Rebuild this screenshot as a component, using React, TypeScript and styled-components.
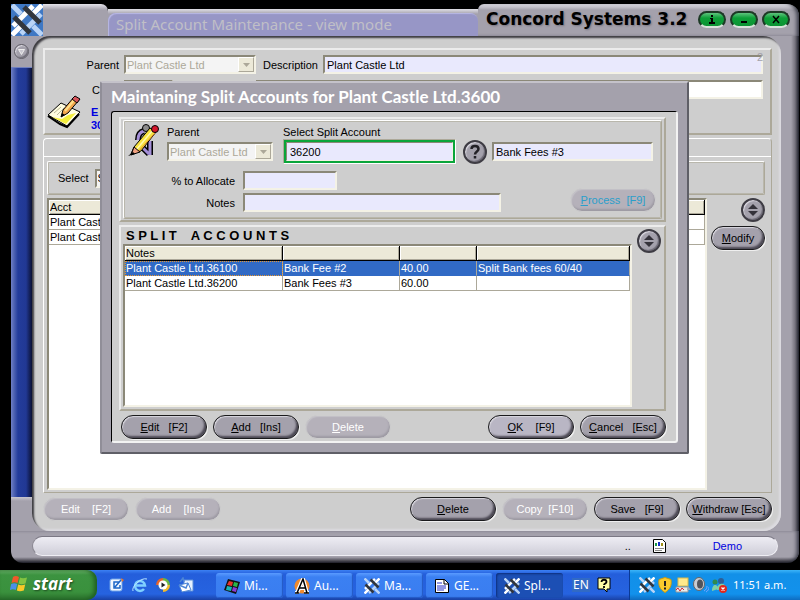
import React from "react";
import styled, { createGlobalStyle, css } from "styled-components";

const c = {
  metal: "#a4a1ac",
  face: "#cecece",
  tan: "#aca899",
  field: "#e9e9fd",
  header: "#ece9d8",
  select: "#316ac5",
};

const Global = createGlobalStyle`
  * { box-sizing: border-box; }
  body { margin: 0; background: #000; }
  body, button, input, select, table {
    font-family: "Liberation Sans", Arial, sans-serif;
    font-size: 11px;
    line-height: 14px;
    color: #000;
  }
`;

/* ---------- shared parts ---------- */

const sunken = css`
  border: 2px solid;
  border-color: #8b8878 #f4f2e6 #f4f2e6 #8b8878;
`;

const raised = css`
  border: 2px solid;
  border-color: #ececec ${c.tan} ${c.tan} #ececec;
`;

const etched = css`
  border: 1px solid ${c.tan};
  border-color: #fff ${c.tan} ${c.tan} #fff;
  outline: 1px solid;
  outline-color: #b9b7ac;
  outline-offset: -2px;
  border-radius: 2px;
`;

const TextInput = styled.input<{ $white?: boolean; $width?: string }>`
  ${sunken}
  width: ${(p) => p.$width ?? "100%"};
  min-width: 0;
  height: 19px;
  padding: 0 2px;
  background: ${(p) => (p.$white ? "#fff" : c.field)};
  &:focus { outline: none; }
`;

const SelectFrame = styled.div<{ $width: string }>`
  ${sunken}
  display: flex;
  width: ${(p) => p.$width};
  height: 19px;
  background: #f4f4f4;
`;

const SelectControl = styled.select`
  appearance: none;
  flex: 1;
  min-width: 0;
  border: 0;
  padding: 0 1px;
  background: transparent;
  &:disabled { color: ${c.tan}; opacity: 1; }
`;

const SelectArrow = styled.span`
  display: flex;
  align-items: center;
  justify-content: center;
  width: 16px;
  background: ${c.header};
  border: 1px solid #fff;
  border-right-color: ${c.tan};
  border-bottom-color: ${c.tan};
`;

const DropDown = ({ id, value, width, disabled }: { id: string; value: string; width: string; disabled?: boolean }) => (
  <SelectFrame $width={width}>
    <SelectControl id={id} disabled={disabled} defaultValue={value}>
      <option>{value}</option>
    </SelectControl>
    <SelectArrow>
      <svg width="7" height="4" viewBox="0 0 7 4"><path d="M0 0h7L3.5 4z" fill={c.tan} /></svg>
    </SelectArrow>
  </SelectFrame>
);

const Pill = styled.button<{ $light?: boolean; $narrow?: boolean; $cyan?: boolean }>`
  flex: none;
  width: ${(p) => (p.$narrow ? 54 : 86)}px;
  height: 24px;
  padding: 0;
  border: 1px solid #1a1a1c;
  border-radius: 12px;
  background: ${(p) => (p.$light ? "#b9b6c4" : c.metal)};
  box-shadow: inset 1px 1px 1px #d9d7df, inset -2px -2px 2px #4c4954, 1px 1px 0 #efefef;
  white-space: pre;
  text-align: center;
  &:disabled {
    border-color: ${c.face};
    background: #b5b1ba;
    box-shadow: inset 1px 1px 1px #c4c2c8, inset -1px -2px 2px #9d9aa3;
    color: ${(p) => (p.$cyan ? "#2a9fcb" : "#fff")};
  }
`;

const RoundButton = styled.button<{ $small?: boolean }>`
  flex: none;
  display: flex;
  align-items: center;
  justify-content: center;
  width: ${(p) => (p.$small ? 15 : 24)}px;
  height: ${(p) => (p.$small ? 15 : 24)}px;
  padding: 0;
  border: ${(p) => (p.$small ? "1px solid #5f5d66" : "2px solid #3e3c44")};
  border-radius: 50%;
  background: ${c.metal};
  box-shadow: inset 1px 1px 1px #dedce4, inset -1px -1px 1px #6b6874;
`;

const UpDown = ({ label }: { label: string }) => (
  <RoundButton aria-label={label}>
    <svg width="12" height="14" viewBox="0 0 12 14">
      <path d="M6 1l5 5H1z" fill="#34323a" />
      <path d="M6 13l5-5H1z" fill="#34323a" />
    </svg>
  </RoundButton>
);

const GridFrame = styled.div`
  ${sunken}
  flex: 1;
  min-width: 0;
  overflow: hidden;
  background: #fff;
`;

const Grid = styled.table`
  width: 100%;
  table-layout: fixed;
  border-collapse: separate;
  border-spacing: 0;
  th, td {
    height: 15px;
    padding: 0 1px;
    text-align: left;
    font-weight: normal;
    line-height: 13px;
    white-space: nowrap;
    overflow: hidden;
  }
  th {
    background: ${c.header};
    border-right: 1px solid #000;
    border-bottom: 1px solid #000;
    box-shadow: inset 1px 1px 0 #fff, inset -1px -1px 0 ${c.tan};
  }
  td {
    border-right: 1px solid ${c.tan};
    border-bottom: 1px solid ${c.tan};
  }
`;

const Row = styled.tr<{ $selected?: boolean }>`
  ${(p) =>
    p.$selected &&
    css`
      td { background: ${c.select}; color: #fff; border-bottom-color: ${c.select}; }
      td:first-child { outline: 1px dotted #e8962e; outline-offset: -1px; }
    `}
`;

/* ---------- drawings ---------- */

const LogoMark = ({ size, blue }: { size: number; blue?: boolean }) => (
  <svg width={size} height={size} viewBox="0 0 32 32">
    {blue && <rect width="32" height="32" fill="#3f78c4" />}
    <g strokeWidth="5" fill="none">
      <path d="M1 1l9 9M22 22l9 9" stroke="#b9d4f7" />
      <path d="M31 1l-9 9M1 31l9-9" stroke="#fff" />
      <path d="M2 22L22 2" stroke="#fff" />
      <path d="M10 30l20-20" stroke="#b9d4f7" />
      <path d="M13 3l16 16" stroke="#32363d" />
      <path d="M3 13l16 16" stroke="#32363d" />
    </g>
  </svg>
);

const NotePencil = () => (
  <svg width="34" height="34" viewBox="0 0 34 34">
    <path d="M1 20L14 8l19 9-13 14z" fill="#fffde0" stroke="#000" />
    <path d="M1 21l12 8 7 3 12-13" fill="none" stroke="#000" strokeWidth="2" />
    <path d="M5 22l14 7 10-11-8 2-6 4z" fill="#f4ee3c" />
    <path d="M7 18l7-6M10 20l7-7" stroke="#b9b89a" />
    <path d="M14 22l2-7L27 2l5 3-11 13z" fill="#f3a64b" stroke="#000" />
    <path d="M18 16L28 4" stroke="#ffe08a" strokeWidth="2" />
    <path d="M25 4l3-3 5 3-3 4z" fill="#d8565c" stroke="#000" />
    <path d="M14 22l1-4 3 2z" fill="#000" />
  </svg>
);

const PencilPeople = () => (
  <svg width="32" height="34" viewBox="0 0 32 34">
    <path d="M10 16c0-5 2-8 6-9M22 17v14M15 24l6 6" fill="none" stroke="#000" strokeWidth="6" />
    <path d="M10 16c0-5 2-8 6-9M22 17v14M15 24l6 6" fill="none" stroke="#a48fd8" strokeWidth="3" />
    <circle cx="18" cy="4" r="3.5" fill="#8b8b8b" stroke="#000" />
    <path d="M3 30L6 23 22 4l6 4-15 19z" fill="#f7e23e" stroke="#000" />
    <path d="M8 26L25 6" stroke="#fff9b0" strokeWidth="1.5" />
    <path d="M10 28L27 9" stroke="#e08b2d" strokeWidth="1" />
    <circle cx="27" cy="5" r="3.5" fill="#d3162b" stroke="#000" />
    <path d="M6 23l6 5-9 3z" fill="#f0a080" stroke="#000" />
    <path d="M0 32l5-4 2 2z" fill="#000" />
  </svg>
);

/* ---------- main window ---------- */

const Screen = styled.div`
  display: flex;
  flex-direction: column;
  min-height: 100vh;
  background: #000;
`;

const Desktop = styled.main`
  position: relative;
  flex: 1;
  display: flex;
  padding: 4px 1px 7px 11px;
`;

const Frame = styled.section`
  flex: 1;
  min-width: 0;
  display: flex;
  flex-direction: column;
`;

const TitleRow = styled.header`
  display: flex;
  height: 32px;
  align-items: stretch;
`;

const LeftTab = styled.div`
  width: 65px;
  border-radius: 0 7px 0 0;
  background: linear-gradient(#e4e3ea, ${c.metal} 6px);
`;

const CaptionSlot = styled.div`
  flex: 1;
  min-width: 0;
  display: flex;
  margin-top: 5px;
  padding-top: 4px;
  background: linear-gradient(#e0dfe6, ${c.metal} 5px);
`;

const Caption = styled.h1`
  flex: 1;
  margin: 0;
  padding: 0 8px;
  border-radius: 8px 8px 0 0;
  background: #9796c6;
  box-shadow: inset 1px 1px 1px #b9b8e4;
  font: 15px/23px "Noto Sans", sans-serif;
  color: #c0bfc6;
  white-space: nowrap;
`;

const BrandTab = styled.div`
  display: flex;
  align-items: center;
  gap: 4px;
  width: 321px;
  padding: 0 9px 2px 8px;
  border-radius: 6px 12px 0 0;
  background: linear-gradient(#e4e3ea, ${c.metal} 6px);
  box-shadow: inset -4px 0 4px -2px #2b2d3a;
`;

const Brand = styled.span`
  flex: 1;
  font: bold 17px/20px "DejaVu Sans", Verdana, sans-serif;
  text-shadow: 1px 1px 2px #77747f;
  white-space: nowrap;
`;

const GreenButton = styled.button`
  display: flex;
  align-items: center;
  justify-content: center;
  width: 28px;
  height: 17px;
  padding: 0;
  border: 2px solid #1d3a26;
  border-bottom-color: #d8e2da;
  border-radius: 9px;
  background: linear-gradient(#5fc47e, #0d9f38 5px, #0c9334);
`;

const Middle = styled.div`
  flex: 1;
  display: flex;
  padding-right: 18px;
  background: linear-gradient(90deg, ${c.metal} calc(100% - 8px), #77747f calc(100% - 4px), #1c1e28);
`;

const Rail = styled.div`
  display: flex;
  flex-direction: column;
  width: 21px;
`;

const RailTop = styled.div`
  display: flex;
  align-items: center;
  justify-content: center;
  height: 31px;
`;

const RailBar = styled.div`
  flex: 1;
  border-top: 1px solid #6f7fc0;
  background: linear-gradient(90deg, #6f80c4, #233c9b 7px, #213894 15px, #0a1033);
`;

const RailFoot = styled.div`
  height: 34px;
  background: linear-gradient(#c9c7cf, ${c.metal} 4px);
`;

const Content = styled.div`
  flex: 1;
  min-width: 0;
  display: flex;
  flex-direction: column;
  padding: 12px 9px 10px 11px;
  border-radius: 18px;
  background: ${c.face};
  box-shadow: inset 2px 2px 2px #3c3b40, inset -2px -2px 2px #dcdbe0;
`;

const HeaderPanel = styled.div`
  ${raised}
  display: flex;
  height: 87px;
  padding: 5px 7px 4px 2px;
`;

const IconColumn = styled.div<{ $width: number; $bottom?: boolean }>`
  display: flex;
  flex: none;
  align-items: ${(p) => (p.$bottom ? "flex-end" : "flex-start")};
  width: ${(p) => p.$width}px;
`;

const HeaderFields = styled.div`
  flex: 1;
  display: grid;
  grid-template-columns: 39px 132px 67px 1fr;
  grid-template-rows: 19px 19px 27px;
  row-gap: 6px;
  align-items: center;
`;

const HeaderLabel = styled.label<{ $inset?: boolean }>`
  padding-right: 5px;
  padding-left: ${(p) => (p.$inset ? 7 : 0)}px;
  text-align: ${(p) => (p.$inset ? "left" : "right")};
  white-space: nowrap;
`;

const BlueNote = styled.div`
  padding-left: 6px;
  font-weight: bold;
  line-height: 13px;
  color: #0000e0;
`;

const WideCell = styled.div`
  grid-column: 3 / 5;
  display: flex;
`;

const CornerCount = styled.span`
  position: absolute;
  top: 50px;
  right: 37px;
  color: #a3a2ab;
`;

const TabPanel = styled.div`
  flex: 1;
  display: flex;
  flex-direction: column;
  margin: 3px 0 4px;
  border: 1px solid;
  border-color: #fff ${c.tan} ${c.tan} #fff;
  border-radius: 4px 4px 0 0;
`;

const TabStrip = styled.div`
  height: 18px;
  border-bottom: 1px solid #fff;
`;

const TabBody = styled.div`
  flex: 1;
  display: flex;
  flex-direction: column;
  gap: 3px;
  padding: 4px 6px 2px 3px;
`;

const FilterRow = styled.div`
  ${etched}
  display: flex;
  align-items: center;
  gap: 6px;
  height: 34px;
  padding-left: 10px;
`;

const GridRow = styled.div`
  flex: 1;
  display: flex;
  gap: 4px;
`;

const SideButtons = styled.div`
  display: flex;
  flex-direction: column;
  align-items: flex-end;
  gap: 4px;
`;

const ButtonRow = styled.div<{ $indent?: boolean }>`
  display: flex;
  gap: 6px;
  padding-left: ${(p) => (p.$indent ? 2 : 0)}px;
`;

const Spacer = styled.span`
  flex: 1;
`;

const StatusArea = styled.footer`
  height: 32px;
  padding: 5px 21px 7px;
  border-radius: 0 0 12px 12px;
  background: linear-gradient(${c.metal} 26px, #5e5c66 29px, #1b1c24);
  box-shadow: inset -4px 0 4px -2px #2b2d3a;
`;

const StatusPill = styled.div`
  display: flex;
  align-items: center;
  height: 20px;
  padding-right: 35px;
  border: 1px solid #7b7884;
  border-color: #7b7884 #efeef4 #efeef4 #8b8892;
  border-radius: 10px;
  background: linear-gradient(#eeedf4, #cfced8);
`;

const StatusDots = styled.span`
  width: 28px;
`;

const StatusUser = styled.span`
  margin-left: 47px;
  color: #0000e0;
`;

/* ---------- dialog ---------- */

const Dialog = styled.section`
  position: absolute;
  top: 81px;
  left: 100px;
  right: 111px;
  padding: 0 9px 9px;
  border: 2px solid;
  border-color: #c4c2ca #5f5f67 #5f5f67 #908e98;
  border-radius: 2px;
  background: ${c.metal};
`;

const DialogTitle = styled.h2`
  margin: 0;
  font: bold 17px/28px Lato, sans-serif;
  color: #fff;
  white-space: nowrap;
`;

const DialogBody = styled.div`
  display: flex;
  flex-direction: column;
  padding: 5px 10px 2px 7px;
  border: 1px solid #000;
  border-right: 2px solid #f2f2f2;
  border-bottom: 2px solid #f2f2f2;
  border-radius: 3px;
  background: ${c.face};
`;

const EntryPanel = styled.form`
  ${raised}
  height: 105px;
  padding: 1px 2px;
`;

const EntryGroup = styled.div`
  ${etched}
  display: flex;
  height: 99px;
  padding: 3px 5px 4px 4px;
`;

const EntryFields = styled.div`
  flex: 1;
  min-width: 0;
`;

const AccountGrid = styled.div`
  display: grid;
  grid-template-columns: 109px 173px 22px 1fr;
  grid-template-rows: 15px 25px;
  column-gap: 7px;
  align-items: center;
  padding-right: 3px;
`;

const AccountLabel = styled.label<{ $wide?: boolean }>`
  grid-column: ${(p) => (p.$wide ? "2 / 5" : "1")};
`;

const FocusFrame = styled.div`
  display: flex;
  height: 25px;
  padding: 1px;
  border: 1px solid;
  border-color: ${c.tan} #fff #fff ${c.tan};
  background: #fff;
  input { height: 21px; outline: 2px solid #0aa53a; outline-offset: -1px; padding: 0 3px; }
`;

const AllocationRow = styled.div`
  display: flex;
  align-items: flex-end;
  justify-content: space-between;
  margin-top: 7px;
`;

const AllocationGrid = styled.div`
  display: grid;
  grid-template-columns: 76px 258px;
  row-gap: 3px;
  align-items: center;
`;

const AllocationLabel = styled.label`
  padding-right: 8px;
  text-align: right;
  white-space: nowrap;
`;

const ListPanel = styled.div`
  ${raised}
  display: flex;
  gap: 3px;
  margin: 3px 0 4px;
  padding: 0 0 2px 2px;
`;

const ListColumn = styled.div`
  flex: 1;
  min-width: 0;
  display: flex;
  flex-direction: column;
`;

const ListTitle = styled.h3`
  margin: 0;
  padding: 1px 3px 0;
  font: bold 13px/16px "Liberation Sans", sans-serif;
  white-space: pre;
`;

const SplitFrame = styled(GridFrame)`
  flex: none;
  height: 163px;
`;

const SideSlot = styled.div`
  width: 29px;
  padding: 2px 0 0 2px;
`;

/* ---------- taskbar ---------- */

const Taskbar = styled.nav`
  display: flex;
  height: 30px;
  background: linear-gradient(#3c81f3, #245edb 4px, #2663e0 24px, #1941a5);
  button, span, time { font-family: "Noto Sans", sans-serif; font-size: 12px; color: #fff; }
`;

const StartButton = styled.button`
  display: flex;
  align-items: center;
  gap: 5px;
  width: 97px;
  padding: 0 0 2px 10px;
  border: 0;
  border-radius: 0 10px 10px 0;
  background: linear-gradient(#6fb86f, #3c9340 5px, #3a913d 22px, #2a6f2c);
  box-shadow: inset -3px 0 4px #1f5f22;
`;

const StartText = styled.b`
  font: italic bold 17px/20px "Open Sans", sans-serif;
  text-shadow: 1px 1px 2px #1c4a1e;
`;

const QuickLaunch = styled.div`
  display: flex;
  align-items: center;
  gap: 7px;
  width: 119px;
  padding-left: 12px;
`;

const TaskList = styled.div`
  display: flex;
  gap: 3px;
  flex: 1;
  padding: 3px 0 2px;
`;

const TaskButton = styled.button<{ $active?: boolean }>`
  display: flex;
  align-items: center;
  gap: 4px;
  width: 67px;
  padding: 0 0 0 8px;
  border: 0;
  border-radius: 3px;
  background: ${(p) => (p.$active ? "#1c4fb4" : "linear-gradient(#5a9bff, #3b80f2 4px, #3a7df0)")};
  box-shadow: ${(p) => (p.$active ? "inset 1px 1px 2px #0d2f7c" : "inset -1px -1px 1px #2459c4")};
`;

const Language = styled.div`
  display: flex;
  align-items: center;
  gap: 7px;
  width: 59px;
  padding-left: 2px;
`;

const LanguageCode = styled.span`
  padding: 0 1px;
  background: #316ac5;
`;

const Tray = styled.div`
  display: flex;
  align-items: center;
  gap: 2px;
  width: 171px;
  padding-left: 9px;
  border-left: 1px solid #0a3a96;
  background: linear-gradient(#3cb4f8, #1290e8 4px, #1291ec 24px, #0e6cc0);
`;

const Clock = styled.time`
  margin-left: 4px;
  && { font-size: 11px; }
  white-space: nowrap;
`;

const FlagIcon = () => (
  <svg width="18" height="18" viewBox="0 0 18 18">
    <path d="M3 2c2-1.500 4-1 6 0L7.500 8C5.500 7 3.500 7 1.500 8z" fill="#f0582a" />
    <path d="M10 2.500c2 1 4 1 7 0L15.500 8.500c-3 1-5 1-7 0z" fill="#83c341" />
    <path d="M1.200 9c2-1 4-1 6 0L5.800 15c-2-1-4-1-6 0z" fill="#4a8fe8" />
    <path d="M8.200 9.500c2 1 4 1 7 0L13.800 15.500c-3 1-5 1-7 0z" fill="#f8c828" />
  </svg>
);

const QuickDesktop = () => (
  <svg width="16" height="16" viewBox="0 0 16 16">
    <rect x="1" y="2" width="12" height="12" rx="2" fill="#f4f8ff" stroke="#6aa0e8" />
    <path d="M10 5H5v6h6V8M6 10l6-7" fill="none" stroke="#1d66c8" strokeWidth="1.500" />
    <path d="M12 1l3 2-2 2z" fill="#e8742a" />
  </svg>
);
const QuickBrowser = () => (
  <svg width="16" height="16" viewBox="0 0 16 16">
    <path d="M3 8.500h10A5 5 0 1 0 12 12" fill="none" stroke="#7fd0ff" strokeWidth="2.500" />
    <path d="M1 14C-1 10 9 0 15 2" fill="none" stroke="#b8e6ff" />
  </svg>
);
const QuickPlayer = () => (
  <svg width="16" height="16" viewBox="0 0 16 16">
    <circle cx="8" cy="8" r="7" fill="#2b62c8" />
    <path d="M8 1a7 7 0 0 1 7 7H8z" fill="#6ab644" />
    <path d="M8 1a7 7 0 0 0-7 7h7z" fill="#e8642a" />
    <path d="M8 15a7 7 0 0 0 7-7H8z" fill="#f2b92c" />
    <circle cx="8" cy="8" r="4.500" fill="#fff" />
    <path d="M6.500 5.500v5l4-2.500z" fill="#222" />
  </svg>
);
const QuickMail = () => (
  <svg width="16" height="16" viewBox="0 0 16 16">
    <path d="M6 3h9v11H6z" fill="#e6f1ff" stroke="#5a8ed8" />
    <path d="M1 8l9-2 3 7-9 2z" fill="#fff" stroke="#4d86d6" />
    <path d="M1 8l7 3 2-5M2 5l3-4 1 4" fill="none" stroke="#4d86d6" strokeWidth="1.500" />
  </svg>
);
const CubeIcon = () => (
  <svg width="16" height="16" viewBox="0 0 16 16">
    <path d="M4 1l12 3-4 12L0 12z" fill="#111" />
    <path d="M5 3l4 1-1 4-5-1z" fill="#e8322a" /><path d="M10 4l4 1-1 4-4-1z" fill="#2ab84a" />
    <path d="M3 8l5 1-1 4-5-1z" fill="#19b5b5" /><path d="M9 9l4 1-1 4-4-1z" fill="#8a3ad8" />
  </svg>
);
const ALetterIcon = () => (
  <svg width="16" height="16" viewBox="0 0 16 16">
    <circle cx="8" cy="8" r="7.500" fill="#f08a2c" />
    <path d="M1 15h4M10 15h5M3 15L9 1l4 14M5 10h7" fill="none" stroke="#fff" strokeWidth="4" />
    <path d="M1 15h4M10 15h5M3 15L9 1l4 14M5 10h7" fill="none" stroke="#000" strokeWidth="1.500" />
  </svg>
);
const DocIcon = () => (
  <svg width="16" height="16" viewBox="0 0 16 16">
    <path d="M1.500 1.500h9l4 4v9h-13z" fill="#fff" stroke="#000" />
    <path d="M10 1v5h5" fill="none" stroke="#000" />
    <path d="M3 5h5M3 8h9M3 10h9M3 12h7" stroke="#2430c8" />
  </svg>
);
const HelpNoteIcon = () => (
  <svg width="14" height="16" viewBox="0 0 14 16">
    <path d="M1 1h12v11h-3v3l-3-3H1z" fill="#ffffa8" stroke="#000" />
    <path d="M4.500 5c0-3 5-3 5 0 0 1.500-2.500 1.500-2.500 3M7 9v2" fill="none" stroke="#000" strokeWidth="1.800" />
  </svg>
);
const ShieldIcon = () => (
  <svg width="16" height="16" viewBox="0 0 16 16">
    <path d="M8 .5l6 2c1 6-1 10-6 13C3 12.500 1 8.500 2 2.500z" fill="#f9cb2d" stroke="#c89a12" />
    <path d="M8 4v5M8 10.500v2" stroke="#222" strokeWidth="2" />
  </svg>
);
const ComputerIcon = () => (
  <svg width="16" height="16" viewBox="0 0 16 16">
    <rect x="3" y="1" width="10" height="8" fill="#ffe98c" stroke="#d8b84a" />
    <path d="M1 10h12v5H1z" fill="#ececec" stroke="#999" />
    <path d="M1 13l2-2 2 3 2-3 2 2" fill="none" stroke="#d82a2a" />
    <path d="M13 9l3 4h-4z" fill="#9ab" />
  </svg>
);
const SpeakerIcon = () => (
  <svg width="16" height="16" viewBox="0 0 16 16">
    <ellipse cx="6" cy="7" rx="5.500" ry="6.500" fill="#c9ccd2" stroke="#666" />
    <ellipse cx="7" cy="7" rx="3" ry="4.500" fill="#50545c" />
    <path d="M11 14c2-1 3-3 3-5M13 15c2-1 3-3 3-5" fill="none" stroke="#7aa5ff" />
  </svg>
);
const PeopleIcon = () => (
  <svg width="16" height="16" viewBox="0 0 16 16">
    <circle cx="10" cy="4" r="3" fill="#2c5f98" /><circle cx="4" cy="5" r="2.500" fill="#2f8a4e" />
    <path d="M1 14c0-8 6-7 6-2M6 13c0-8 9-8 9-1z" fill="#7fd0a4" />
    <circle cx="12" cy="12" r="4" fill="#e0281c" />
    <path d="M10.500 10.500l3 3M13.500 10.500l-3 3" stroke="#fff" strokeWidth="1.300" />
  </svg>
);

const tasks = [
  { label: "Mi...", icon: <CubeIcon /> },
  { label: "Au...", icon: <ALetterIcon /> },
  { label: "Ma...", icon: <LogoMark size={16} /> },
  { label: "GE...", icon: <DocIcon /> },
  { label: "Spl...", icon: <LogoMark size={16} />, active: true },
];

const splits = [
  ["Plant Castle Ltd.36100", "Bank Fee #2", "40.00", "Split Bank fees 60/40"],
  ["Plant Castle Ltd.36200", "Bank Fees #3", "60.00", ""],
];

const MainWindow = () => (
  <Frame>
    <TitleRow>
      <LogoMark size={32} blue />
      <LeftTab />
      <CaptionSlot>
        <Caption>Split Account Maintenance - view mode</Caption>
      </CaptionSlot>
      <BrandTab>
        <Brand>Concord Systems 3.2</Brand>
        <GreenButton aria-label="Information">
          <svg width="8" height="9" viewBox="0 0 8 9"><path d="M3 0h2v2H3zM2 3h3v5H3V4H2zM1 7h6v2H1z" fill="#000" /></svg>
        </GreenButton>
        <GreenButton aria-label="Minimise">
          <svg width="8" height="9" viewBox="0 0 8 9"><path d="M1 7h6" stroke="#000" strokeWidth="2" /></svg>
        </GreenButton>
        <GreenButton aria-label="Close">
          <svg width="8" height="9" viewBox="0 0 8 9"><path d="M1 1l6 7M7 1L1 8" stroke="#000" strokeWidth="1.500" /></svg>
        </GreenButton>
      </BrandTab>
    </TitleRow>
    <Middle>
      <Rail>
        <RailTop>
          <RoundButton $small aria-label="Menu">
            <svg width="7" height="6" viewBox="0 0 7 6"><path d="M.5.5h6L3.500 5.500z" fill="#c9c7d0" stroke="#eee" /></svg>
          </RoundButton>
        </RailTop>
        <RailBar />
        <RailFoot />
      </Rail>
      <Content>
        <HeaderPanel>
          <IconColumn $width={38} $bottom><NotePencil /></IconColumn>
          <HeaderFields>
            <HeaderLabel htmlFor="parent">Parent</HeaderLabel>
            <DropDown id="parent" value="Plant Castle Ltd" width="132px" disabled />
            <HeaderLabel htmlFor="description">Description</HeaderLabel>
            <TextInput id="description" defaultValue="Plant Castle Ltd" />
            <HeaderLabel htmlFor="code" $inset>C</HeaderLabel>
            <TextInput id="code" $width="49px" />
            <WideCell><TextInput aria-label="Details" $white /></WideCell>
            <BlueNote>E<br />30</BlueNote>
          </HeaderFields>
        </HeaderPanel>
        <TabPanel>
          <TabStrip />
          <TabBody>
            <FilterRow>
              <label htmlFor="filter">Select</label>
              <DropDown id="filter" value="Split" width="120px" />
            </FilterRow>
            <GridRow>
              <GridFrame>
                <Grid>
                  <colgroup><col width="60" /><col /></colgroup>
                  <thead><tr><th>Acct</th><th /></tr></thead>
                  <tbody>
                    {splits.map((s) => <Row key={s[0]}><td>{s[0]}</td><td /></Row>)}
                  </tbody>
                </Grid>
              </GridFrame>
              <SideButtons>
                <UpDown label="Scroll accounts" />
                <Pill $narrow><u>M</u>odify</Pill>
              </SideButtons>
            </GridRow>
          </TabBody>
        </TabPanel>
        <ButtonRow>
          <Pill disabled>{"Edit    [F2]"}</Pill>
          <Pill disabled>{"Add    [Ins]"}</Pill>
          <Spacer />
          <Pill><u>D</u>elete</Pill>
          <Pill disabled>{"Copy  [F10]"}</Pill>
          <Pill>{"Save   [F9]"}</Pill>
          <Pill><u>W</u>{"ithdraw [Esc]"}</Pill>
        </ButtonRow>
      </Content>
    </Middle>
    <StatusArea>
      <StatusPill>
        <Spacer />
        <StatusDots>..</StatusDots>
        <svg width="13" height="14" viewBox="0 0 13 14">
          <path d="M.5.5h9l3 3v10H.5z" fill="#fff" stroke="#000" />
          <path d="M3 7V4" stroke="#1a9a4a" strokeWidth="2" /><path d="M6 7V3" stroke="#1430c8" strokeWidth="2" />
          <path d="M9 7V4" stroke="#a09018" strokeWidth="2" /><path d="M2 9.500h9M2 11.500h7" stroke="#888" />
        </svg>
        <StatusUser>Demo</StatusUser>
      </StatusPill>
    </StatusArea>
  </Frame>
);

const SplitDialog = () => (
  <Dialog role="dialog" aria-labelledby="dialog-title">
    <DialogTitle id="dialog-title">Maintaning Split Accounts for Plant Castle Ltd.3600</DialogTitle>
    <DialogBody>
      <EntryPanel onSubmit={(e) => e.preventDefault()}>
        <EntryGroup>
          <IconColumn $width={39}><PencilPeople /></IconColumn>
          <EntryFields>
            <AccountGrid>
              <AccountLabel htmlFor="d-parent">Parent</AccountLabel>
              <AccountLabel htmlFor="d-account" $wide>Select Split Account</AccountLabel>
              <DropDown id="d-parent" value="Plant Castle Ltd" width="106px" disabled />
              <FocusFrame><TextInput id="d-account" defaultValue="36200" /></FocusFrame>
              <RoundButton type="button" aria-label="Help">
                <svg width="12" height="16" viewBox="0 0 12 16">
                  <path d="M2.500 5c0-4 7-4 7 0 0 2.500-3.500 2.500-3.500 5.500M6 12v2.500" fill="none" stroke="#222026" strokeWidth="2.500" />
                </svg>
              </RoundButton>
              <TextInput aria-label="Account name" defaultValue="Bank Fees #3" />
            </AccountGrid>
            <AllocationRow>
              <AllocationGrid>
                <AllocationLabel htmlFor="d-percent">% to Allocate</AllocationLabel>
                <TextInput id="d-percent" $width="94px" />
                <AllocationLabel htmlFor="d-notes">Notes</AllocationLabel>
                <TextInput id="d-notes" />
              </AllocationGrid>
              <Pill type="button" disabled $cyan><u>P</u>{"rocess  [F9]"}</Pill>
            </AllocationRow>
          </EntryFields>
        </EntryGroup>
      </EntryPanel>
      <ListPanel>
        <ListColumn>
          <ListTitle>S P L I T    A C C O U N T S</ListTitle>
          <SplitFrame>
            <Grid>
              <colgroup>
                <col width="158" /><col width="117" /><col width="77" /><col />
              </colgroup>
              <thead><tr><th>Notes</th><th /><th /><th /></tr></thead>
              <tbody>
                {splits.map((s, i) => (
                  <Row key={s[0]} $selected={i === 0}>
                    {s.map((v, j) => <td key={j}>{v}</td>)}
                  </Row>
                ))}
              </tbody>
            </Grid>
          </SplitFrame>
        </ListColumn>
        <SideSlot><UpDown label="Scroll split accounts" /></SideSlot>
      </ListPanel>
      <ButtonRow $indent>
        <Pill><u>E</u>{"dit   [F2]"}</Pill>
        <Pill><u>A</u>{"dd   [Ins]"}</Pill>
        <Pill disabled><u>D</u>elete</Pill>
        <Spacer />
        <Pill $light><u>O</u>{"K    [F9]"}</Pill>
        <Pill><u>C</u>{"ancel   [Esc]"}</Pill>
      </ButtonRow>
    </DialogBody>
  </Dialog>
);

export default function App() {
  return (
    <Screen>
      <Global />
      <Desktop>
        <MainWindow />
        <CornerCount>2</CornerCount>
        <SplitDialog />
      </Desktop>
      <Taskbar>
        <StartButton><FlagIcon /><StartText>start</StartText></StartButton>
        <QuickLaunch><QuickDesktop /><QuickBrowser /><QuickPlayer /><QuickMail /></QuickLaunch>
        <TaskList>
          {tasks.map((t) => (
            <TaskButton key={t.label} $active={t.active}>{t.icon}{t.label}</TaskButton>
          ))}
        </TaskList>
        <Language><LanguageCode>EN</LanguageCode><HelpNoteIcon /></Language>
        <Tray>
          <LogoMark size={16} /><ShieldIcon /><ComputerIcon /><SpeakerIcon /><PeopleIcon />
          <Clock>11:51 a.m.</Clock>
        </Tray>
      </Taskbar>
    </Screen>
  );
}
